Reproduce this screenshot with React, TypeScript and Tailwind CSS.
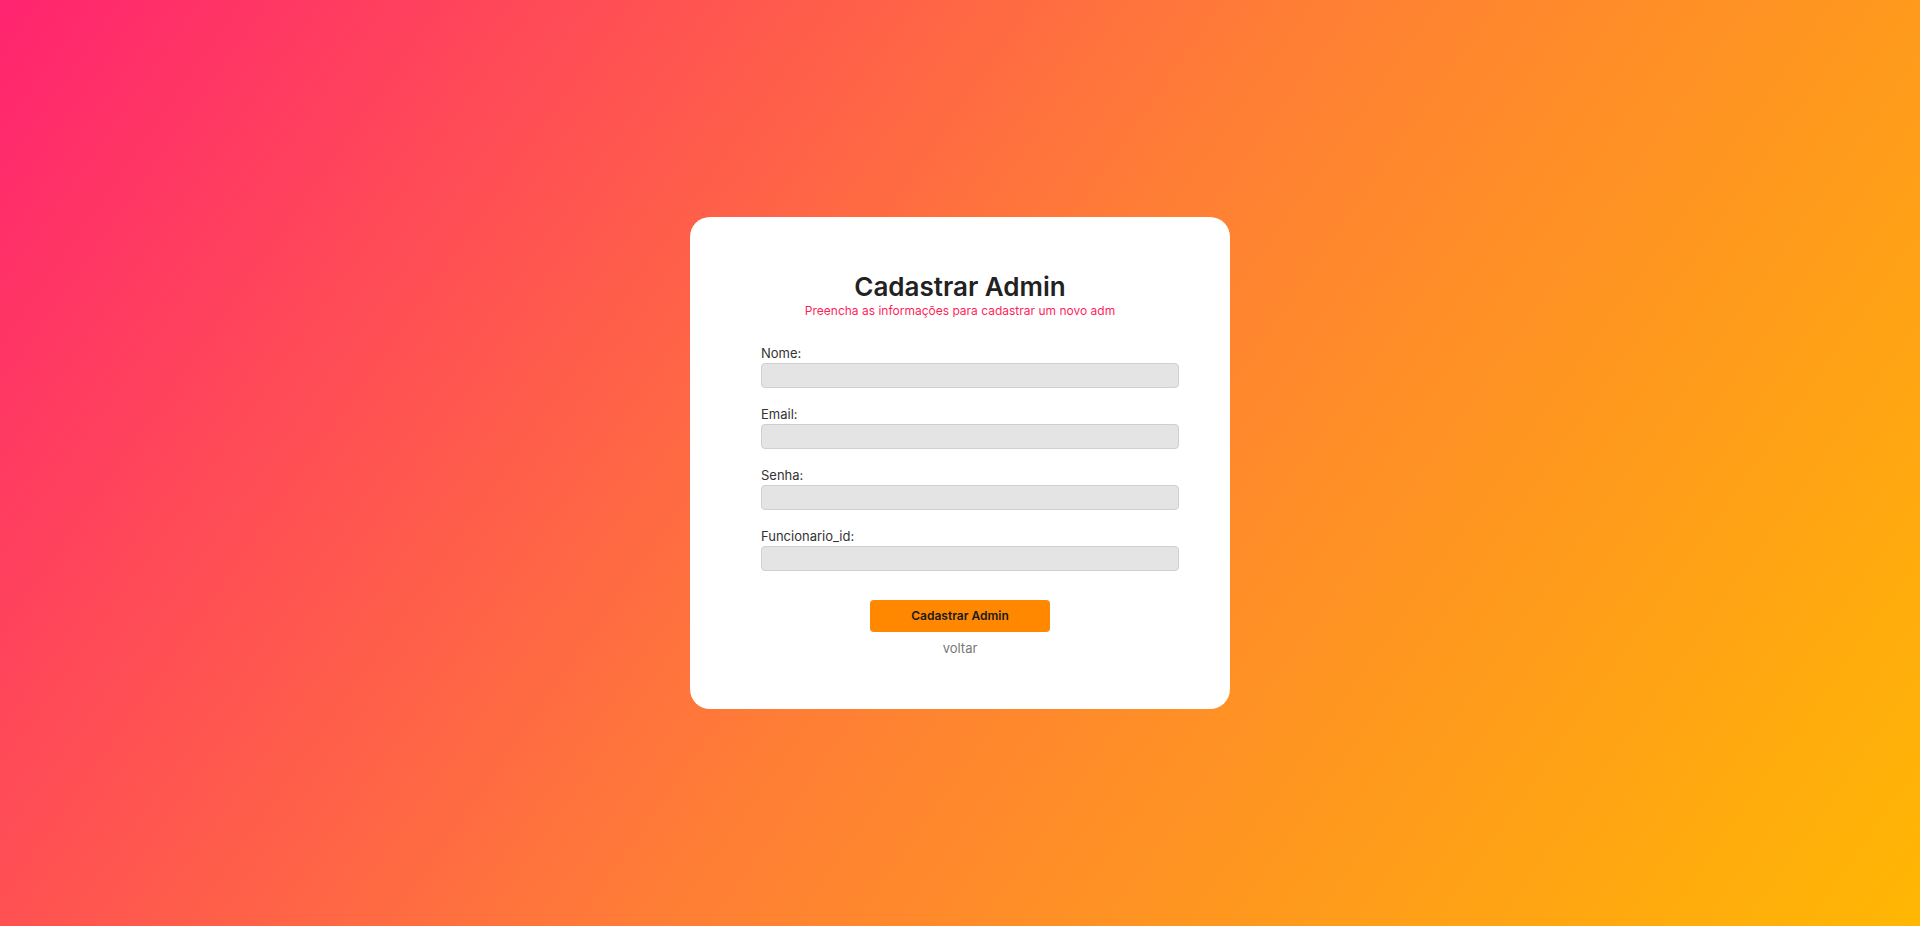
function Field({ label }: { label: string }) {
  return (
    <div className="flex flex-col">
      <label className="text-[13px] leading-[16px] text-[#333333]">{label}</label>
      <input
        type="text"
        className="mt-[2px] h-[25px] w-[418px] rounded-[4px] border border-[#cfcfcf] bg-[#e4e4e4] px-2 text-[13px] outline-none"
      />
    </div>
  );
}

export default function App() {
  return (
    <div className="flex h-[926px] w-full items-center justify-center bg-[linear-gradient(125deg,#ff2470_0%,#ff7d36_50%,#ffb703_100%)] font-['Inter',sans-serif]">
      <div className="flex h-[492px] w-[540px] flex-col rounded-[20px] bg-white pt-[54px]">
        <h1 className="text-center text-[26px] leading-[32px] font-semibold text-[#222222]">Cadastrar Admin</h1>
        <p className="text-center text-[12px] leading-[16px] text-[#ff1f5a]">
          Preencha as informações para cadastrar um novo adm
        </p>
        <form className="mt-[26px] ml-[71px] flex flex-col gap-[18px]">
          <Field label="Nome:" />
          <Field label="Email:" />
          <Field label="Senha:" />
          <Field label="Funcionario_id:" />
        </form>
        <div className="mt-[29px] flex flex-col items-center">
          <button className="h-[32px] w-[180px] rounded-[4px] bg-[#ff8800] text-[12px] font-semibold text-[#1a1a1a]">
            Cadastrar Admin
          </button>
          <a href="#" className="mt-[8px] text-[13px] leading-[16px] text-[#777777]">
            voltar
          </a>
        </div>
      </div>
    </div>
  );
}
